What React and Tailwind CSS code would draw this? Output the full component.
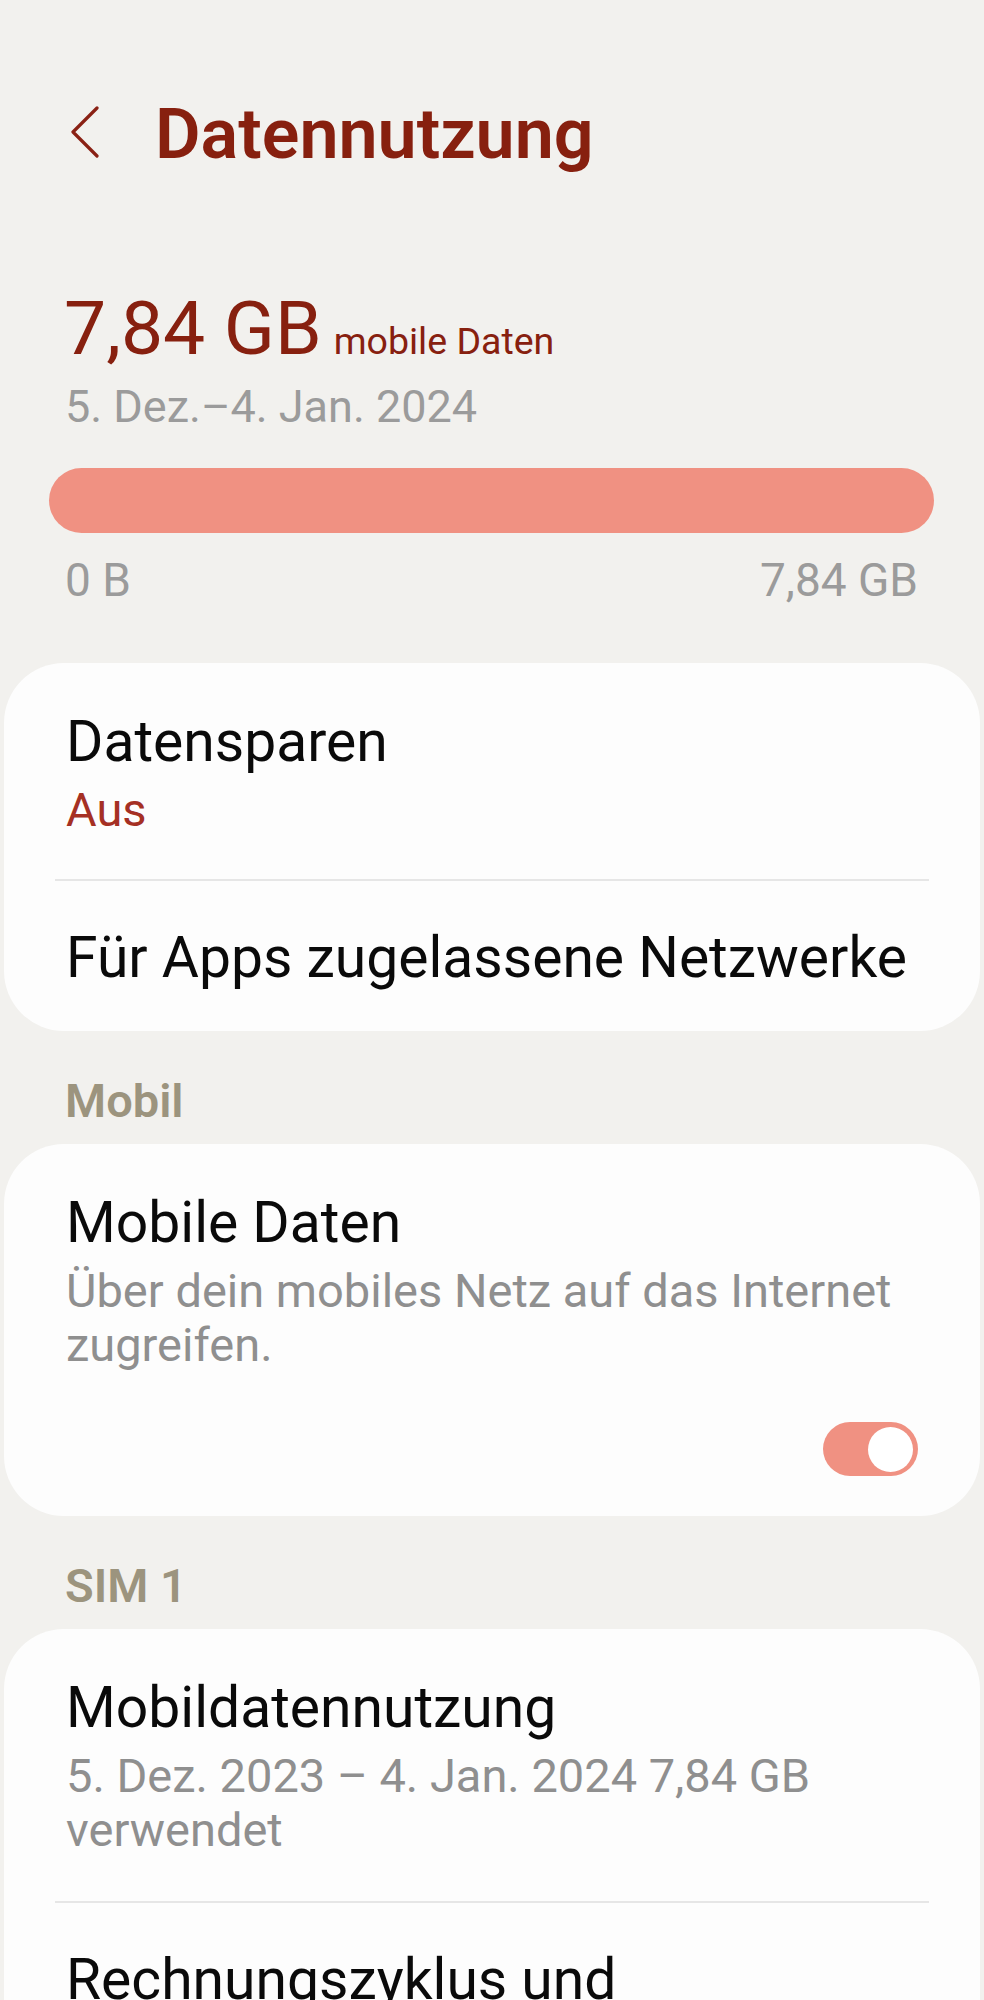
import React from "react";

const Chevron = () => (
  <svg width="30" height="52" viewBox="0 0 30 52" fill="none" className="shrink-0">
    <polyline points="27,2 3,26 27,50" stroke="#8a2114" strokeWidth="3.2" strokeLinecap="round" strokeLinejoin="round" />
  </svg>
);

const Divider = () => <div className="mx-[51px] h-[2px] bg-[#e6e6e6]" />;

const SectionLabel = ({ children }) => (
  <div className="mt-[42px] mb-[15px] pl-[65px] text-[47px] leading-[56px] font-semibold text-[#9c947e]">
    {children}
  </div>
);

const Item = ({ title, sub, subColor = "text-[#8f8f8f]", className = "" }) => (
  <div className={`pl-[62px] pr-[40px] ${className}`}>
    <div className="text-[57px] leading-[66px] text-[#0a0a0a]">{title}</div>
    {sub && <div className={`mt-[8px] text-[47px] leading-[54px] ${subColor}`}>{sub}</div>}
  </div>
);

const Toggle = () => (
  <div className="flex h-[54px] w-[95px] items-center justify-end rounded-full bg-[#f09182] pr-[5px]">
    <div className="h-[45px] w-[45px] rounded-full bg-white" />
  </div>
);

export default function App() {
  return (
    <div className="h-[2000px] w-full overflow-hidden bg-[#f2f1ee] font-['Roboto','Liberation_Sans',sans-serif]">
      {/* header */}
      <div className="flex items-center pl-[70px] pt-[94px]">
        <div className="mb-[5px]">
          <Chevron />
        </div>
        <h1 className="ml-[55px] text-[70px] leading-[80px] font-semibold text-[#87200f]">Datennutzung</h1>
      </div>

      {/* usage summary */}
      <div className="mt-[112px] flex items-baseline pl-[64px] text-[#87200f]">
        <span className="text-[75px] leading-[84px]">7,84 GB</span>
        <span className="ml-[12px] text-[37.5px] leading-[40px]">mobile Daten</span>
      </div>
      <div className="mt-[10px] pl-[65px] text-[45px] leading-[54px] text-[#9b9b9b]">5. Dez.–4. Jan. 2024</div>
      <div className="mt-[34px] ml-[49px] mr-[50px] h-[65px] rounded-full bg-[#f09182]" />
      <div className="mt-[22px] flex justify-between pl-[65px] pr-[66px] text-[46px] leading-[50px] text-[#9b9b9b]">
        <span>0 B</span>
        <span>7,84 GB</span>
      </div>

      {/* card 1 */}
      <div className="mx-[4px] mt-[58px] rounded-[60px] bg-[#fdfdfd]">
        <Item title="Datensparen" sub="Aus" subColor="text-[#a53024]" className="pt-[46px] pb-[42px]" />
        <Divider />
        <Item title="Für Apps zugelassene Netzwerke" className="pt-[44px] pb-[40px]" />
      </div>

      <SectionLabel>Mobil</SectionLabel>

      {/* card 2 */}
      <div className="mx-[4px] rounded-[60px] bg-[#fdfdfd] pt-[46px] pb-[40px]">
        <Item
          title="Mobile Daten"
          sub="Über dein mobiles Netz auf das Internet zugreifen."
        />
        <div className="mt-[50px] flex justify-end pr-[62px]">
          <Toggle />
        </div>
      </div>

      <SectionLabel>SIM 1</SectionLabel>

      {/* card 3 */}
      <div className="mx-[4px] rounded-[60px] bg-[#fdfdfd]">
        <Item
          title="Mobildatennutzung"
          sub="5. Dez. 2023 – 4. Jan. 2024 7,84 GB verwendet"
          className="pt-[46px] pb-[44px]"
        />
        <Divider />
        <Item title="Rechnungszyklus und Datenwarnung" className="pt-[44px] pb-[40px] pr-[300px]" />
      </div>
    </div>
  );
}
